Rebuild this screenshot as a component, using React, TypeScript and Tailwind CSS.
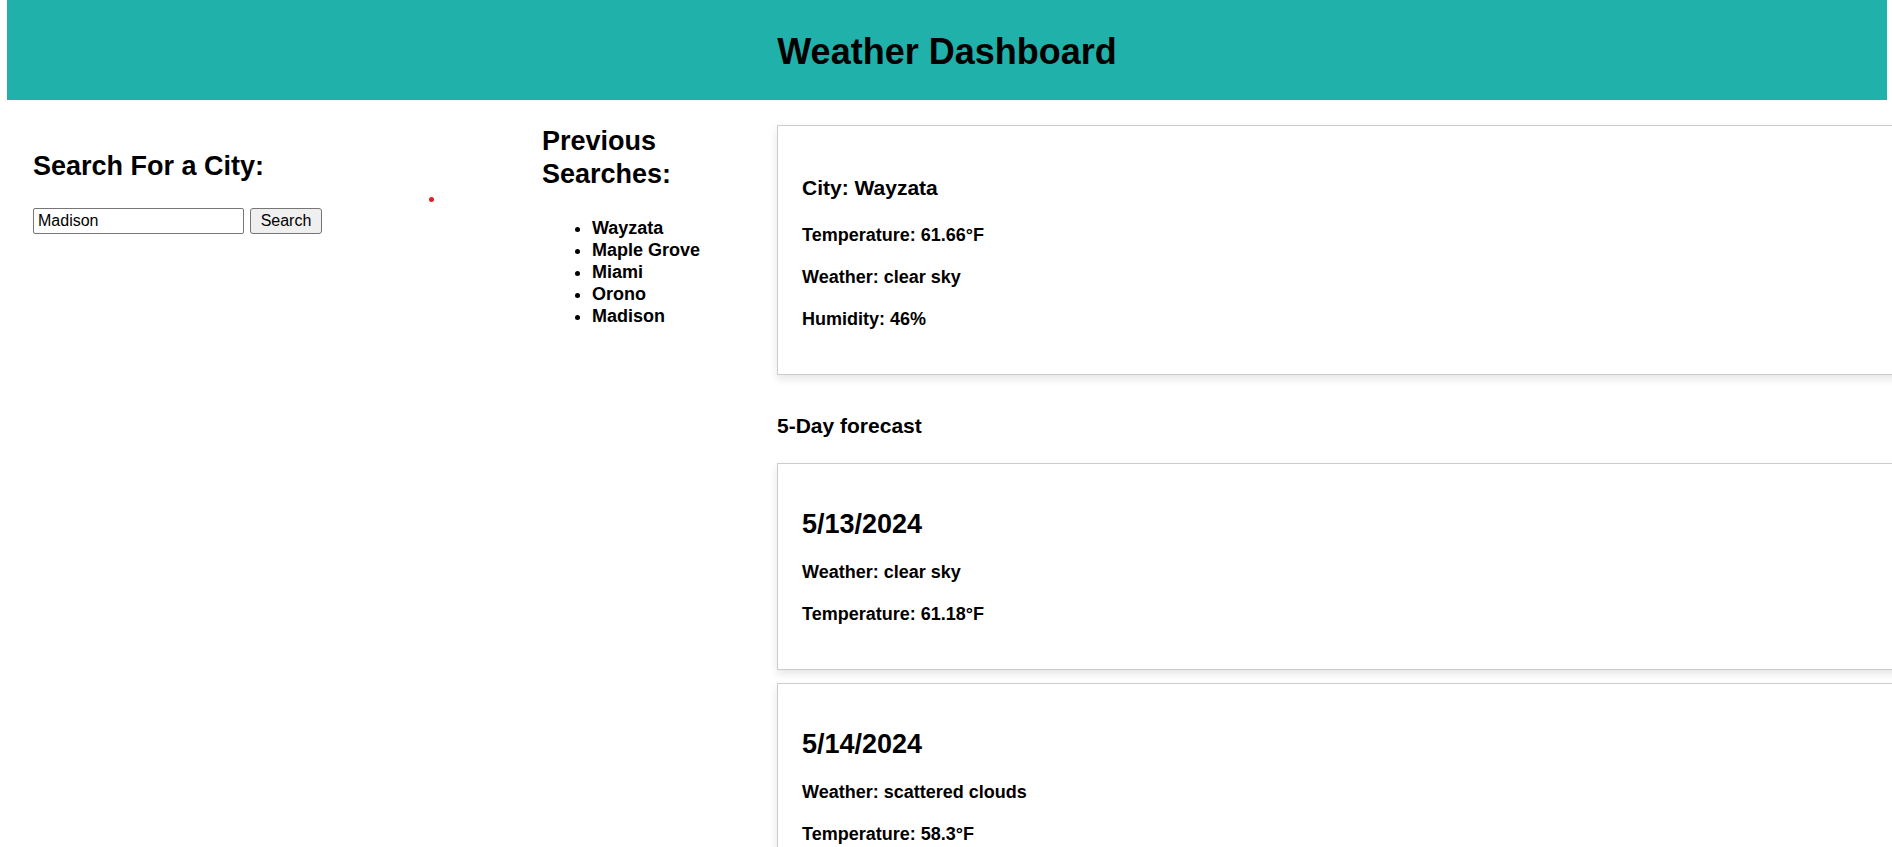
import React from "react";

const searches = ["Wayzata", "Maple Grove", "Miami", "Orono", "Madison"];

const forecast = [
  { date: "5/13/2024", weather: "clear sky", temp: "61.18" },
  { date: "5/14/2024", weather: "scattered clouds", temp: "58.3" },
  { date: "5/15/2024", weather: "few clouds", temp: "63.05" },
  { date: "5/16/2024", weather: "light rain", temp: "59.72" },
  { date: "5/17/2024", weather: "overcast clouds", temp: "60.4" },
];

const App: React.FC = () => {
  return (
    <div className="h-screen overflow-hidden bg-white text-black font-bold font-['Liberation_Sans',Arial,sans-serif]">
      {/* Header */}
      <header className="ml-[7px] w-[1880px] h-[100px] bg-[#20b2aa] flex items-center justify-center pt-[2px]">
        <h1 className="text-[36px] leading-[41px]">Weather Dashboard</h1>
      </header>

      <div className="flex pt-[25px]">
        {/* Search */}
        <div className="relative w-[542px] shrink-0 pl-[33px] pt-[26px]">
          <h2 className="text-[27px] leading-[31px]">Search For a City:</h2>
          <form className="flex gap-[6px] mt-[26px] font-normal">
            <input
              type="text"
              defaultValue="Madison"
              className="w-[211px] h-[26px] border border-[#767676] rounded-[2px] px-[4px] text-[16px] text-black outline-none"
            />
            <button
              type="button"
              className="w-[72px] h-[26px] border border-[#767676] rounded-[3px] bg-[#efefef] text-[16px] text-black"
            >
              Search
            </button>
          </form>
          <span className="absolute left-[429px] top-[72px] w-[5px] h-[5px] rounded-full bg-[#e41e1e]" />
        </div>

        {/* Previous searches */}
        <div className="w-[235px] shrink-0">
          <h2 className="text-[27px] leading-[33px]">
            Previous
            <br />
            Searches:
          </h2>
          <ul className="list-disc pl-[50px] mt-[26px] text-[18px] leading-[22px]">
            {searches.map((city) => (
              <li key={city}>{city}</li>
            ))}
          </ul>
        </div>

        {/* Weather */}
        <div className="w-[1300px] shrink-0">
          <div className="border border-[#cccccc] shadow-[0_4px_8px_rgba(0,0,0,0.1)] px-6 pt-[50px] pb-[43px]">
            <h3 className="text-[21px] leading-[24px] mb-[23px]">City: Wayzata</h3>
            <p className="text-[18px] leading-[24px] mb-[18px]">Temperature: 61.66°F</p>
            <p className="text-[18px] leading-[24px] mb-[18px]">Weather: clear sky</p>
            <p className="text-[18px] leading-[24px]">Humidity: 46%</p>
          </div>

          <h3 className="text-[21px] leading-[24px] mt-[39px] mb-[25px]">5-Day forecast</h3>

          <div className="flex flex-col gap-[13px]">
            {forecast.map((day) => (
              <div
                key={day.date}
                className="border border-[#cccccc] shadow-[0_4px_8px_rgba(0,0,0,0.1)] px-6 pt-[45px] pb-[43px]"
              >
                <h2 className="text-[27px] leading-[31px] mb-[20px]">{day.date}</h2>
                <p className="text-[18px] leading-[24px] mb-[18px]">Weather: {day.weather}</p>
                <p className="text-[18px] leading-[24px]">Temperature: {day.temp}°F</p>
              </div>
            ))}
          </div>
        </div>
      </div>
    </div>
  );
};

export default App;
